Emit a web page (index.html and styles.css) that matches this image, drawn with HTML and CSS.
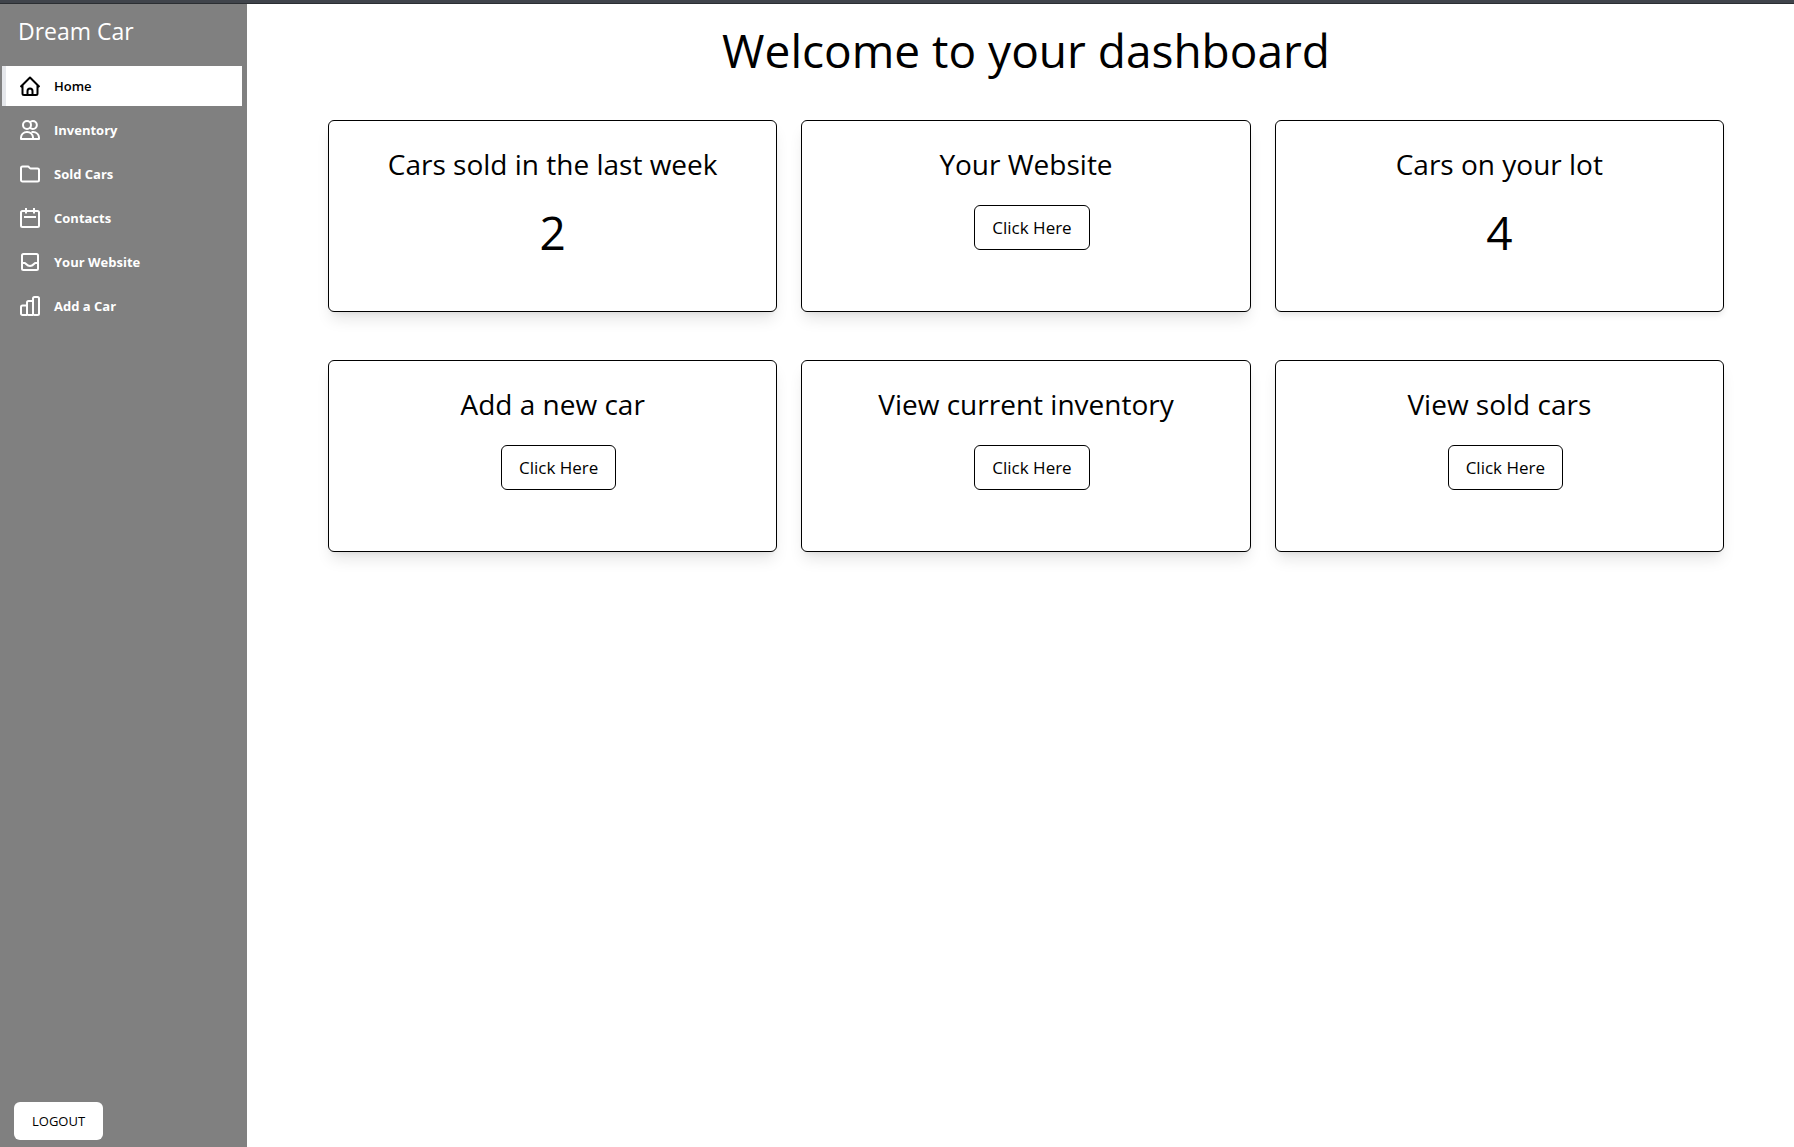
FILE: index.html
```html
<!DOCTYPE html>
<html lang="en">
<head>
  <meta charset="utf-8">
  <meta name="viewport" content="width=device-width, initial-scale=1">
  <title>Dream Car</title>
  <link rel="stylesheet" href="styles.css">
</head>
<body>
  <div class="topbar"></div>
  <div class="layout">
    <aside class="sidebar">
      <div class="brand">Dream Car</div>
      <nav class="nav">
        <a class="nav-link nav-link-active" href="#">
          <svg class="icon" viewBox="0 0 20 20"><path d="M.5 11 10 1.500l9.500 9.500M2.500 9v8.500c0 .9.6 1.500 1.500 1.500h12c.9 0 1.500-.6 1.500-1.500V9M7.500 19v-4a2.500 2.500 0 0 1 5 0v4"/></svg>
          Home
        </a>
        <a class="nav-link" href="#">
          <svg class="icon" viewBox="0 0 20 20"><circle cx="7" cy="5" r="4"/><path d="M10 2.200A4 4 0 1 1 10 7.800M1 19v-1.500C1 14.500 3.500 12 7 12s6 2.500 6 5.500V19ZM11.500 12H13c3.500 0 6 2.500 6 5.500V19h-6"/></svg>
          Inventory
        </a>
        <a class="nav-link" href="#">
          <svg class="icon" viewBox="0 0 20 20"><path d="M1 16V4c0-1 .6-1.500 1.500-1.500H8c1 0 1.500 2 2.500 2h7c.9 0 1.500.6 1.500 1.500v10c0 .9-.6 1.500-1.500 1.500h-15C1.600 17.500 1 16.900 1 16Z"/></svg>
          Sold Cars
        </a>
        <a class="nav-link" href="#">
          <svg class="icon" viewBox="0 0 20 20"><rect x="1" y="3" width="18" height="16" rx="1.500"/><path d="M6 0v5.500M14 0v5.500M4 9h12"/></svg>
          Contacts
        </a>
        <a class="nav-link" href="#">
          <svg class="icon" viewBox="0 0 20 20"><rect x="2" y="2" width="16" height="16" rx="1.500"/><path d="M2 11h2.500c1.500 0 2 3 5.500 3s4-3 5.500-3H18"/></svg>
          Your Website
        </a>
        <a class="nav-link" href="#">
          <svg class="icon" viewBox="0 0 20 20"><path d="M7 19H2.500C1.600 19 1 18.400 1 17.500V11c0-.9.6-1.500 1.500-1.500H7M13 19H8.500c-.9 0-1.500-.6-1.500-1.500v-11C7 5.600 7.600 5 8.500 5H13"/><rect x="13" y="1" width="6" height="18" rx="1.500"/></svg>
          Add a Car
        </a>
      </nav>
      <button class="logout" type="button">LOGOUT</button>
    </aside>
    <main class="main">
      <h1 class="heading">Welcome to your dashboard</h1>
      <div class="cards">
        <section class="card">
          <h2 class="card-title">Cars sold in the last week</h2>
          <p class="card-value">2</p>
        </section>
        <section class="card">
          <h2 class="card-title">Your Website</h2>
          <button class="card-button" type="button">Click Here</button>
        </section>
        <section class="card card-flat">
          <h2 class="card-title">Cars on your lot</h2>
          <p class="card-value">4</p>
        </section>
        <section class="card">
          <h2 class="card-title">Add a new car</h2>
          <button class="card-button" type="button">Click Here</button>
        </section>
        <section class="card">
          <h2 class="card-title">View current inventory</h2>
          <button class="card-button" type="button">Click Here</button>
        </section>
        <section class="card">
          <h2 class="card-title">View sold cars</h2>
          <button class="card-button" type="button">Click Here</button>
        </section>
      </div>
    </main>
  </div>
</body>
</html>
```
FILE: styles.css
```css
* {
  box-sizing: border-box;
}

body {
  margin: 0;
  min-height: 100vh;
  display: flex;
  flex-direction: column;
  background: #fff;
  color: #000;
  font-family: "Open Sans", "Noto Sans", sans-serif;
}

h1,
h2,
p {
  margin: 0;
  font-weight: 400;
}

button {
  font-family: inherit;
  color: inherit;
  background: #fff;
  cursor: pointer;
}

.topbar {
  height: 4px;
  background: #40444b;
  border-bottom: 1px solid #2b2e32;
}

.layout {
  flex: 1;
  display: flex;
}

.sidebar {
  flex: none;
  width: 247px;
  padding: 11px 5px 7px 2px;
  display: flex;
  flex-direction: column;
  background: #808080;
  color: #fff;
}

.brand {
  padding-left: 16px;
  font-size: 23px;
  line-height: 32px;
}

.nav {
  margin-top: 19px;
  display: flex;
  flex-direction: column;
  gap: 4px;
}

.nav-link {
  height: 40px;
  padding-left: 14px;
  display: flex;
  align-items: center;
  gap: 14px;
  border-left: 4px solid transparent;
  color: #fff;
  font-size: 13px;
  font-weight: 700;
  line-height: 20px;
  text-decoration: none;
}

.nav-link-active {
  background: #fff;
  border-left-color: #e5e7eb;
  color: #000;
  font-weight: 600;
}

.icon {
  flex: none;
  width: 20px;
  height: 20px;
  fill: none;
  stroke: currentColor;
  stroke-width: 2;
  stroke-linejoin: round;
}

.logout {
  align-self: flex-start;
  margin-top: auto;
  margin-left: 12px;
  padding: 9px 18px;
  border: 0;
  border-radius: 6px;
  color: #000;
  font-size: 13px;
  font-weight: 500;
  line-height: 20px;
}

.main {
  flex: 1;
  min-width: 0;
  padding: 22px 70px 48px 81px;
}

.heading {
  font-size: 46px;
  line-height: 48px;
  text-align: center;
}

.cards {
  margin-top: 46px;
  display: grid;
  grid-template-columns: repeat(3, minmax(0, 1fr));
  gap: 48px 24px;
}

.card {
  min-height: 192px;
  padding: 24px;
  display: flex;
  flex-direction: column;
  align-items: center;
  gap: 22px;
  border: 1px solid #000;
  border-radius: 6px;
  background: #fff;
  box-shadow: 0 10px 15px -3px rgba(0, 0, 0, 0.1), 0 4px 6px -4px rgba(0, 0, 0, 0.1);
}

.card-flat {
  box-shadow: 0 4px 6px -1px rgba(0, 0, 0, 0.1);
}

.card-title {
  font-size: 28px;
  line-height: 38px;
  text-align: center;
}

.card-value {
  font-size: 46px;
  line-height: 54px;
}

.card-button {
  margin-left: 12px;
  padding: 8px 17px;
  border: 1px solid #000;
  border-radius: 6px;
  font-size: 17px;
  font-weight: 500;
  line-height: 27px;
}
```
